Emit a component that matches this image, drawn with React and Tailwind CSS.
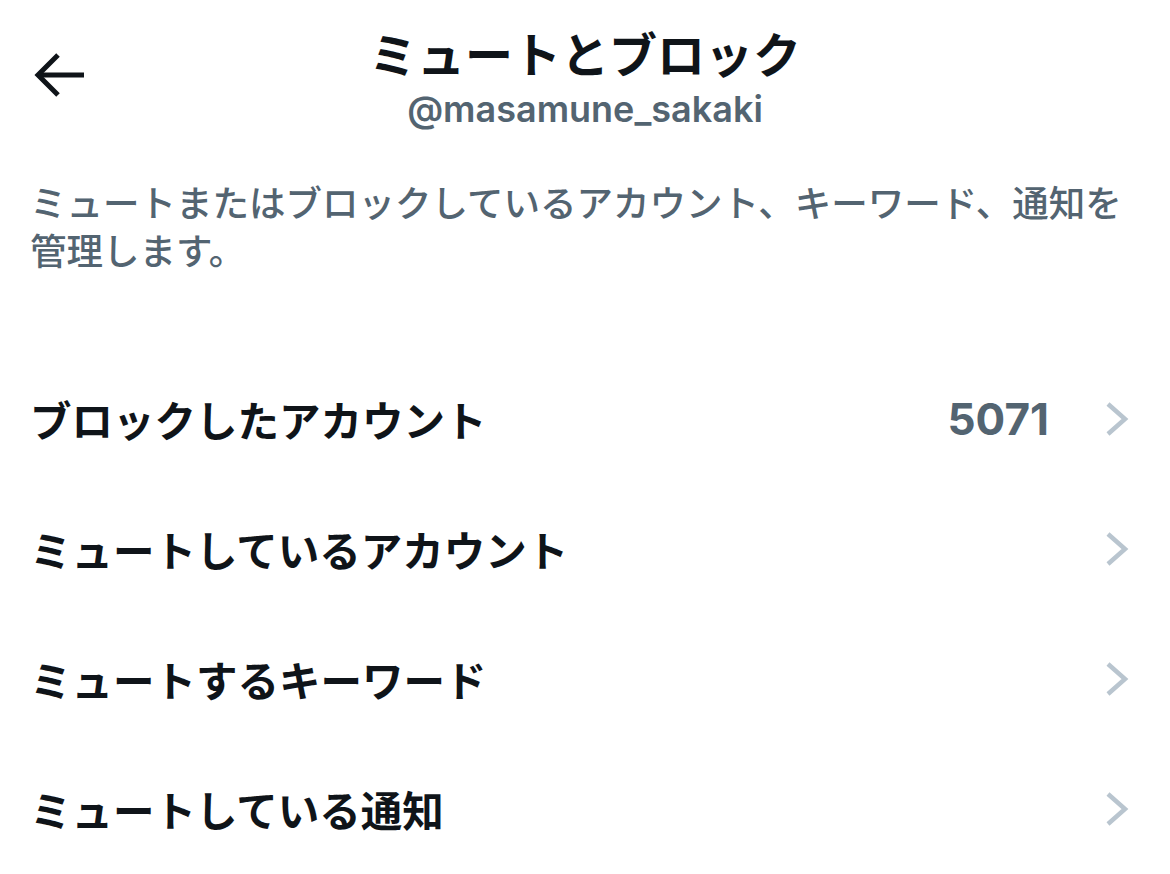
import React from 'react';

const rows = [
    { label: 'ブロックしたアカウント', count: '5071' },
    { label: 'ミュートしているアカウント' },
    { label: 'ミュートするキーワード' },
    { label: 'ミュートしている通知' },
];

function BackArrow() {
    return (
        <svg width="52" height="48" viewBox="0 0 52 48" fill="none" stroke="#0f1419" strokeWidth="5">
            <path d="M4 24H50" />
            <path d="M24 4L4 24L24 44" />
        </svg>
    );
}

function Chevron() {
    return (
        <svg width="24" height="36" viewBox="0 0 24 36" fill="none" stroke="#b9c5cf" strokeWidth="4.5">
            <path d="M3 3L20 18L3 33" />
        </svg>
    );
}

export default function App() {
    return (
        <div className="w-[1170px] h-[874px] overflow-hidden bg-white font-['Inter','Noto_Sans_CJK_JP',sans-serif]">
            <header className="grid grid-cols-[1fr_auto_1fr] px-[34px] pt-[22px]">
                <button className="justify-self-start self-start mt-[29px]">
                    <BackArrow />
                </button>
                <div className="flex flex-col items-center">
                    <h1 className="text-[48px] leading-[60px] font-bold text-[#0f1419] font-['Noto_Sans_CJK_JP',sans-serif]">
                        ミュートとブロック
                    </h1>
                    <p className="mt-[5px] text-[36px] leading-[44px] font-semibold text-[#536471]">@masamune_sakaki</p>
                </div>
                <div />
            </header>

            <p className="mt-[47px] px-[30px] text-[36.5px] leading-[48px] font-medium text-[#536471] font-['Noto_Sans_CJK_JP',sans-serif]">
                ミュートまたはブロックしているアカウント、キーワード、通知を管理します。
            </p>

            <ul className="mt-[80px]">
                {rows.map((row) => (
                    <li key={row.label} className="h-[130px] flex items-center pl-[30px] pr-[41px]">
                        <span className="flex-1 text-[41.5px] font-bold text-[#0f1419] font-['Noto_Sans_CJK_JP',sans-serif]">
                            {row.label}
                        </span>
                        {row.count && (
                            <span className="mr-[56px] text-[44px] font-bold text-[#536471]">{row.count}</span>
                        )}
                        <Chevron />
                    </li>
                ))}
            </ul>
        </div>
    );
}
